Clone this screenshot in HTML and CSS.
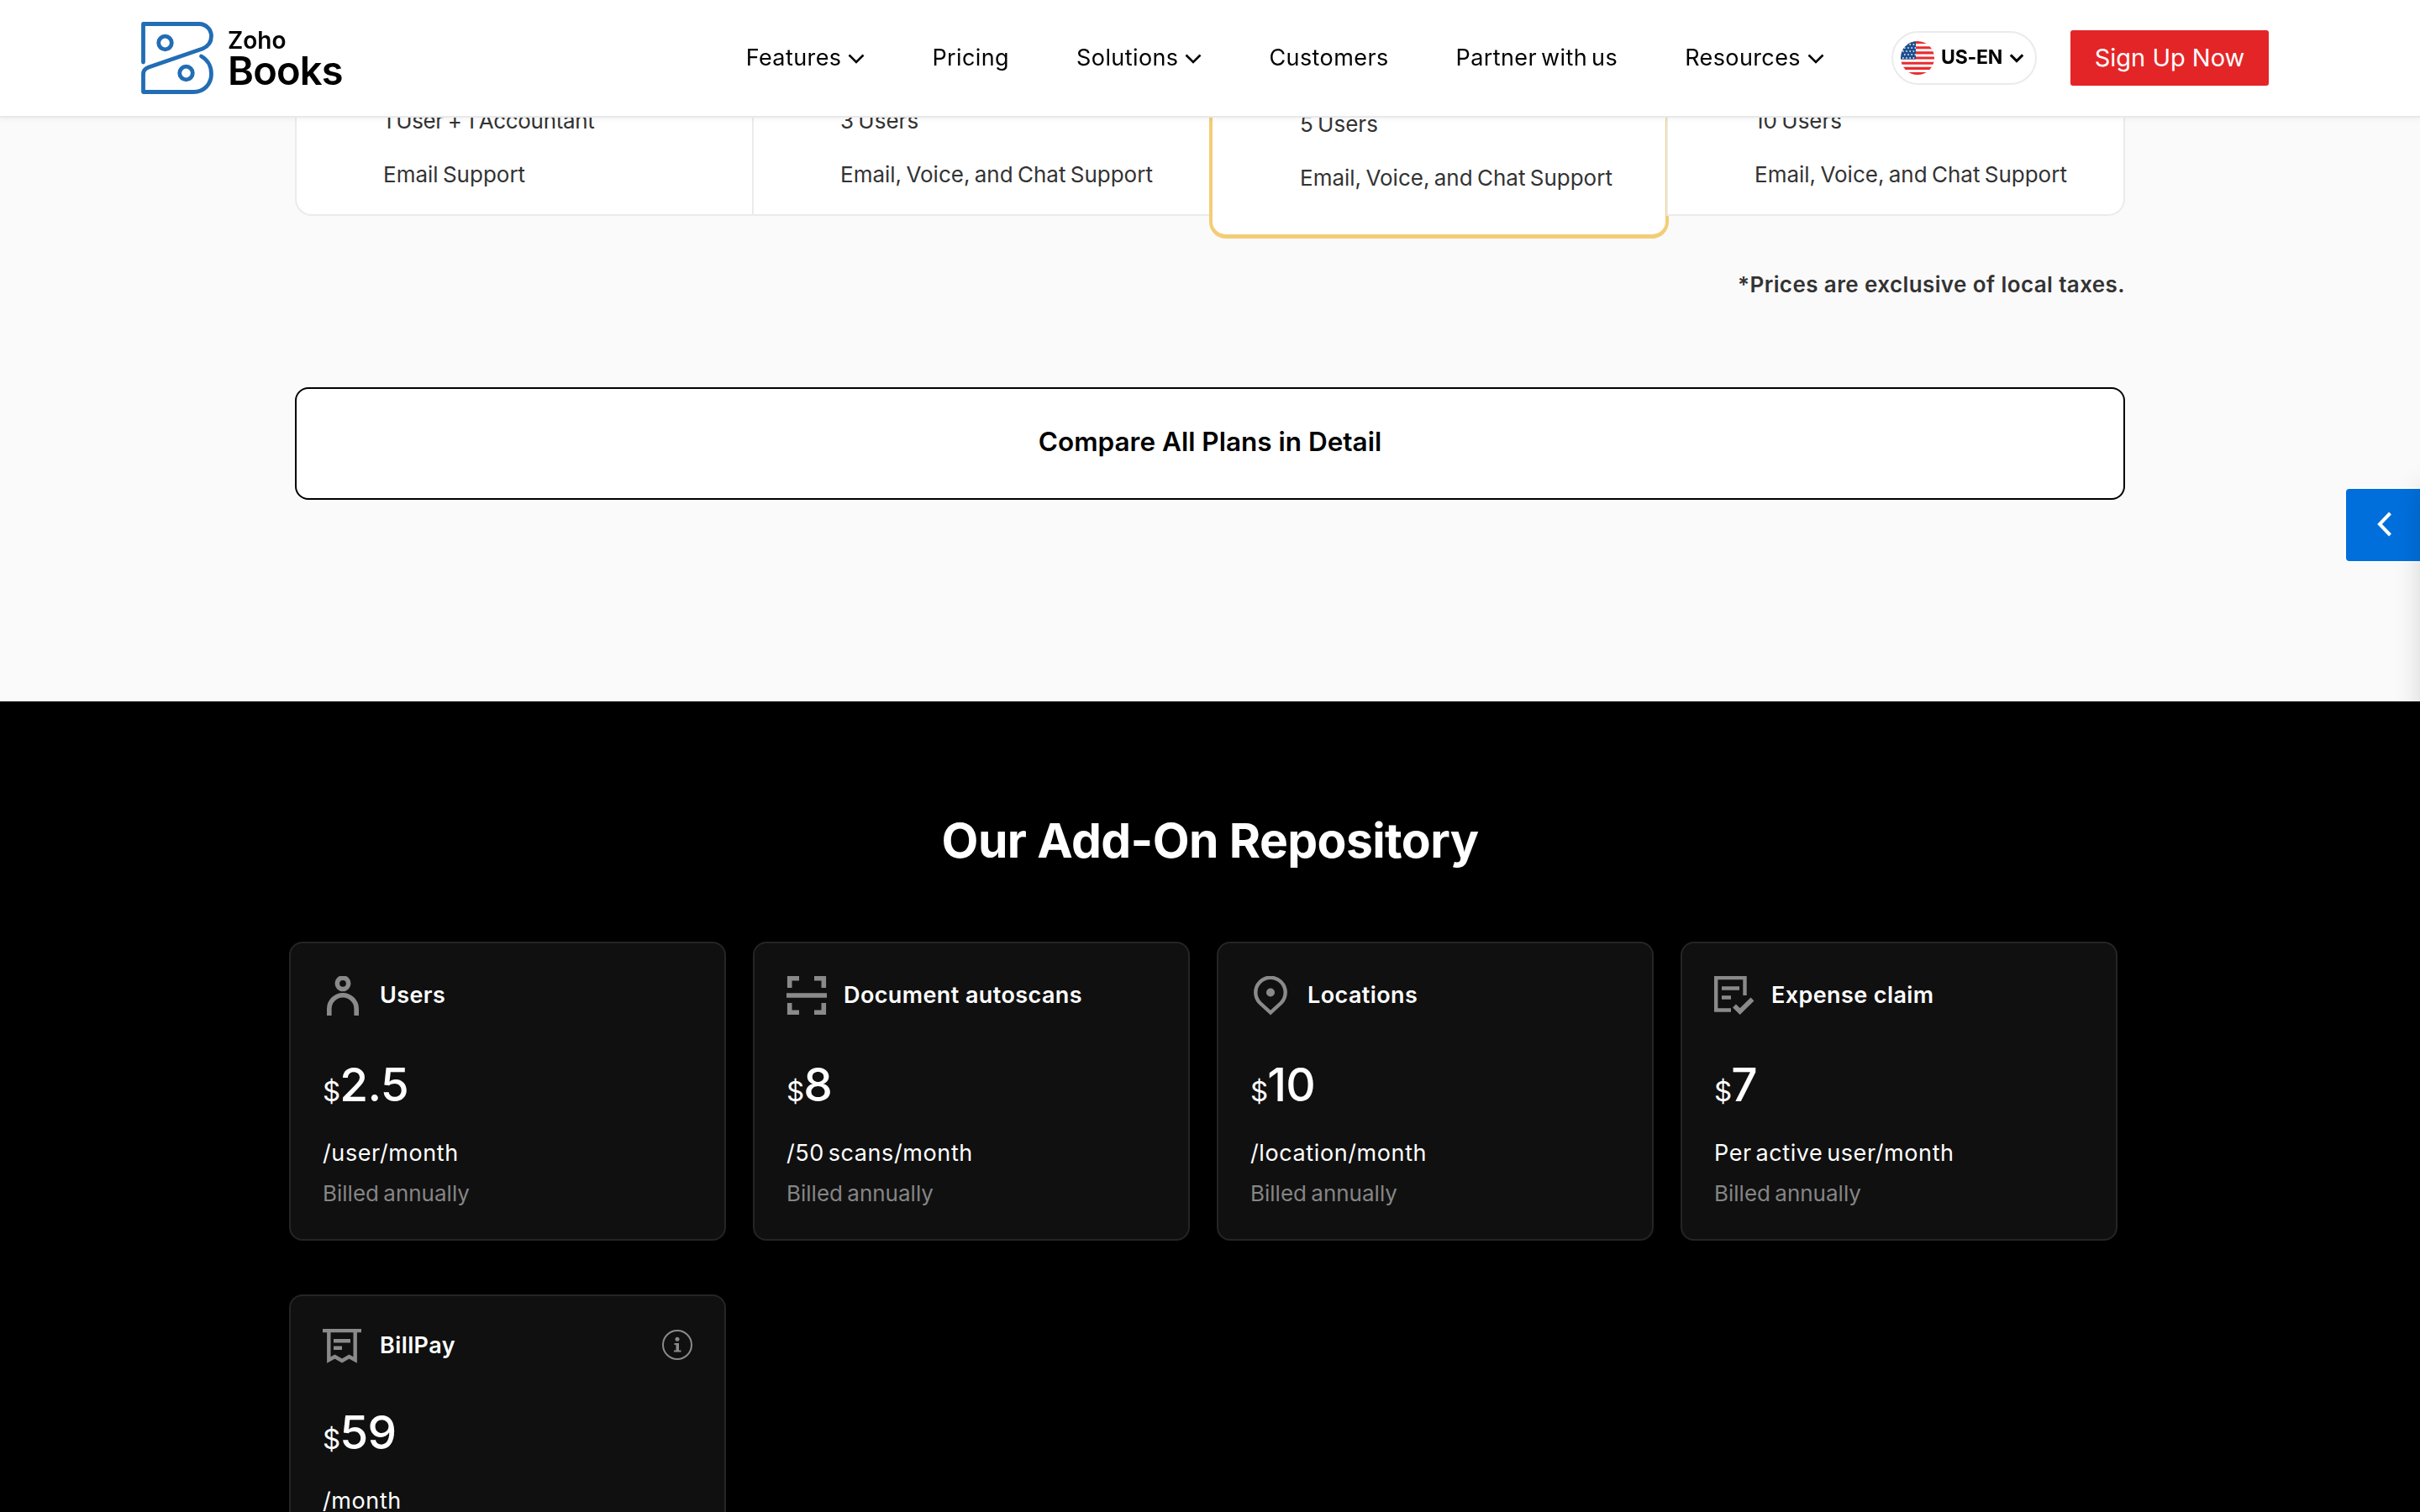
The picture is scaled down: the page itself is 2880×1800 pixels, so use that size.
FILE: index.html
```html
<!DOCTYPE html>
<html lang="en">
<head>
    <meta charset="UTF-8">
    <meta name="viewport" content="width=device-width, initial-scale=1.0">
    <title>Pricing | Zoho Books</title>
    <link rel="stylesheet" href="styles.css">
</head>
<body>

<header class="header">
    <a class="logo" href="#">
        <svg width="86" height="86" viewBox="0 0 86 86" fill="none" stroke="#226db4" stroke-width="4.8" stroke-linecap="round" stroke-linejoin="round">
            <path d="M2.5 48V2.5H69C77 2.5 83.5 9 83.5 17C83.5 24 80 29 73 32L9 54C5 55.5 2.5 58 2.5 62V83.5H62C75 83.5 83.5 74 83.5 62C83.5 53 79 45 71.5 41"/>
            <circle cx="28.5" cy="25" r="7.8"/>
            <circle cx="53.5" cy="61" r="7.8"/>
        </svg>
        <span class="logo-text">
            <span class="logo-zoho">Zoho</span>
            <span class="logo-books">Books</span>
        </span>
    </a>
    <nav class="nav">
        <a class="nav-link" href="#">Features <svg class="chevron" viewBox="0 0 20 12"><path d="M1.5 1.5L10 10L18.5 1.5"/></svg></a>
        <a class="nav-link" href="#">Pricing</a>
        <a class="nav-link" href="#">Solutions <svg class="chevron" viewBox="0 0 20 12"><path d="M1.5 1.5L10 10L18.5 1.5"/></svg></a>
        <a class="nav-link" href="#">Customers</a>
        <a class="nav-link" href="#">Partner with us</a>
        <a class="nav-link" href="#">Resources <svg class="chevron" viewBox="0 0 20 12"><path d="M1.5 1.5L10 10L18.5 1.5"/></svg></a>
    </nav>
    <button class="lang">
        <svg class="flag" width="40" height="40" viewBox="0 0 40 40">
            <clipPath id="round"><circle cx="20" cy="20" r="20"/></clipPath>
            <g clip-path="url(#round)">
                <rect width="40" height="40" fill="#fff"/>
                <path d="M0 1.5H40M0 7.7H40M0 13.9H40M0 20H40M0 26.2H40M0 32.4H40M0 38.5H40" stroke="#ea2b2e" stroke-width="3.1"/>
                <rect width="18" height="21.5" fill="#1c4f8f"/>
                <path d="M2 4H18M4 8H18M2 12H18M4 16H18M2 20H18" stroke="#fff" stroke-width="1.6" stroke-dasharray="1.6 2.6"/>
            </g>
        </svg>
        <span>US-EN</span>
        <svg class="chevron bold" viewBox="0 0 20 12"><path d="M2 2L10 10L18 2"/></svg>
    </button>
    <a class="signup" href="#">Sign Up Now</a>
</header>

<section class="plans-section">
    <div class="plans">
        <ul class="plan">
            <li class="tight">1 User + 1 Accountant</li>
            <li>Email Support</li>
        </ul>
        <ul class="plan">
            <li>3 Users</li>
            <li>Email, Voice, and Chat Support</li>
        </ul>
        <ul class="plan popular">
            <li>5 Users</li>
            <li>Email, Voice, and Chat Support</li>
        </ul>
        <ul class="plan">
            <li>10 Users</li>
            <li>Email, Voice, and Chat Support</li>
        </ul>
    </div>
    <p class="tax-note">*Prices are exclusive of local taxes.</p>
    <a class="compare" href="#">Compare All Plans in Detail</a>
</section>

<section class="addons-section">
    <h2>Our Add-On Repository</h2>
    <div class="addons">
        <div class="addon">
            <div class="addon-head">
                <svg class="icon" width="48" height="47" viewBox="0 0 48 47">
                    <circle cx="24" cy="8.8" r="6.7"/>
                    <path d="M7.8 47V39a16.2 16.2 0 0 1 32.4 0V47"/>
                </svg>
                <h3>Users</h3>
            </div>
            <p class="price"><span class="currency">$</span><span class="amount">2.5</span></p>
            <p class="unit">/user/month</p>
            <p class="billed">Billed annually</p>
        </div>
        <div class="addon">
            <div class="addon-head">
                <svg class="icon" width="48" height="47" viewBox="0 0 48 47">
                    <path d="M3.7 14V2.7H15M33 2.7H44.3V14M44.3 32V43.3H33M15 43.3H3.7V32M0 23H48"/>
                </svg>
                <h3>Document autoscans</h3>
            </div>
            <p class="price"><span class="currency">$</span><span class="amount">8</span></p>
            <p class="unit">/50 scans/month</p>
            <p class="billed">Billed annually</p>
        </div>
        <div class="addon">
            <div class="addon-head">
                <svg class="icon" width="48" height="47" viewBox="0 0 48 47">
                    <path class="thin" d="M24 43.5L11.5 32A17.7 17.7 0 1 1 36.5 32Z"/>
                    <circle class="dot" cx="24" cy="19.5" r="5"/>
                </svg>
                <h3>Locations</h3>
            </div>
            <p class="price"><span class="currency">$</span><span class="amount">10</span></p>
            <p class="unit">/location/month</p>
            <p class="billed">Billed annually</p>
        </div>
        <div class="addon">
            <div class="addon-head">
                <svg class="icon" width="48" height="47" viewBox="0 0 48 47">
                    <path class="thin" d="M20 40.5H2.2V2H36.5V23M9 14.5H30M9 25.5H20"/>
                    <path d="M24 35.5L30.7 42L45.5 27.5"/>
                </svg>
                <h3>Expense claim</h3>
            </div>
            <p class="price"><span class="currency">$</span><span class="amount">7</span></p>
            <p class="unit">Per active user/month</p>
            <p class="billed">Billed annually</p>
        </div>
        <div class="addon">
            <div class="addon-head">
                <svg class="icon" width="48" height="41" viewBox="0 0 48 41">
                    <path class="thin" d="M0 2H46M13 14.2H33M13 22.8H23M7.3 2V37L14.5 33L23 38L31.5 33L38.7 37V2"/>
                </svg>
                <h3>BillPay</h3>
                <svg class="info" width="36" height="36" viewBox="0 0 36 36">
                    <circle cx="18" cy="18" r="17" fill="none" stroke="#8a8a8a" stroke-width="2"/>
                    <circle cx="18" cy="11.3" r="2.5" fill="#8a8a8a"/>
                    <path d="M14.5 16H20V24.5H22.5V26.5H14V24.5H16.5V18H14.5Z" fill="#8a8a8a"/>
                </svg>
            </div>
            <p class="price"><span class="currency">$</span><span class="amount">59</span></p>
            <p class="unit">/month</p>
        </div>
    </div>
</section>

<button class="side-tab">
    <svg width="18" height="30" viewBox="0 0 18 30"><path d="M15.5 2L3 15L15.5 28"/></svg>
</button>
<div class="side-panel"></div>

</body>
</html>
```
FILE: styles.css
```css
* {
    box-sizing: border-box;
}

body {
    margin: 0;
    height: 1800px;
    overflow: hidden;
    font-family: Inter, "Liberation Sans", sans-serif;
    font-size: 26px;
    color: #333;
    background: #fafafa;
}

h2, h3, p, ul {
    margin: 0;
    padding: 0;
}

a {
    color: inherit;
    text-decoration: none;
}

button {
    font-family: inherit;
    padding: 0;
}

/* Header */
.header {
    position: fixed;
    top: 0;
    left: 0;
    right: 0;
    z-index: 10;
    height: 140px;
    padding: 0 180px 0 168px;
    display: flex;
    align-items: center;
    background: #fff;
    border-bottom: 2px solid #e7e9eb;
    box-shadow: 0 2px 6px rgba(0, 0, 0, 0.05);
    color: #000;
}

.logo {
    display: flex;
    gap: 17px;
    margin-right: auto;
}

.logo-text {
    display: flex;
    flex-direction: column;
    padding-top: 7px;
    font-weight: 600;
}

.logo-zoho {
    font-size: 28px;
    line-height: 30px;
}

.logo-books {
    font-size: 47px;
    line-height: 42px;
    letter-spacing: -0.8px;
}

.nav {
    display: flex;
    gap: 80px;
    margin-right: 80px;
    padding-bottom: 2px;
}

.nav-link {
    display: flex;
    align-items: center;
    gap: 8px;
    font-size: 27px;
    letter-spacing: 0.4px;
    word-spacing: -3px;
}

.chevron {
    width: 20px;
    height: 12px;
    margin-top: 3px;
    fill: none;
    stroke: #000;
    stroke-width: 2.6;
}

.chevron.bold {
    width: 18px;
    margin-top: 0;
    stroke-width: 3.4;
}

.lang {
    display: flex;
    align-items: center;
    width: 173px;
    height: 64px;
    padding-left: 9px;
    border: 2px solid #ebebeb;
    border-radius: 32px;
    background: #fff;
    color: #000;
    font-size: 23px;
    font-weight: 700;
    letter-spacing: -0.2px;
}

.lang span {
    margin: 0 8px;
    padding-bottom: 2px;
}

.signup {
    display: flex;
    align-items: center;
    justify-content: center;
    width: 236px;
    height: 66px;
    margin-left: 40px;
    padding-bottom: 2px;
    border-radius: 3px;
    background: #e42527;
    color: #fff;
    font-size: 29px;
}

/* Plans */
.plans-section {
    height: 835px;
    padding: 80px 351px 0;
    overflow: hidden;
}

.plans {
    display: grid;
    grid-template-columns: 544px 544px 544px 546px;
    align-items: start;
}

.plan {
    position: relative;
    height: 177px;
    padding: 30px 0 0 103px;
    list-style: none;
    line-height: 64px;
    word-spacing: -2px;
    background: #fff;
    border: 2px solid #ebebeb;
    border-right: 0;
    white-space: nowrap;
}

.plan .tight {
    letter-spacing: -0.35px;
}

.plan:first-child {
    border-bottom-left-radius: 20px;
}

.plan:last-child {
    border-right: 2px solid #ebebeb;
    border-bottom-right-radius: 20px;
}

.plan.popular {
    width: 547px;
    height: 204px;
    padding: 32px 0 0 104px;
    border: 4px solid #f3cd76;
    border-bottom-width: 5px;
    border-radius: 0 0 20px 20px;
}

.tax-note {
    margin-top: 31px;
    line-height: 48px;
    font-size: 26px;
    font-weight: 600;
    letter-spacing: 0.4px;
    text-align: right;
}

.compare {
    display: flex;
    align-items: center;
    justify-content: center;
    height: 134px;
    margin-top: 98px;
    padding-bottom: 5px;
    background: #fff;
    border: 2px solid #000;
    border-radius: 16px;
    color: #000;
    font-size: 31.5px;
    font-weight: 600;
}

/* Add-ons */
.addons-section {
    height: 965px;
    padding: 126px 344px 0;
    overflow: hidden;
    background: #000;
    color: #fff;
}

.addons-section h2 {
    line-height: 80px;
    font-size: 57px;
    font-weight: 700;
    letter-spacing: -0.6px;
    text-align: center;
}

.addons {
    display: grid;
    grid-template-columns: repeat(4, 520px);
    gap: 64px 32px;
    margin-top: 80px;
}

.addon {
    padding: 39px 38px 30px;
    background: #101010;
    border: 2px solid #252525;
    border-radius: 16px;
}

.addon-head {
    display: flex;
    align-items: center;
    gap: 20px;
}

.addon-head h3 {
    padding-bottom: 2px;
    line-height: 30px;
    font-size: 27px;
    font-weight: 600;
    letter-spacing: 0.4px;
}

.icon {
    fill: none;
    stroke: #8a8a8a;
    stroke-width: 5.6;
}

.icon .thin {
    stroke-width: 4.4;
}

.icon .dot {
    fill: #8a8a8a;
    stroke: none;
}

.info {
    margin: -4px 0 0 auto;
}

.price {
    margin-top: 52px;
    line-height: 60px;
    font-size: 55px;
    font-weight: 500;
}

.currency {
    line-height: 1;
    font-size: 33px;
    font-weight: 400;
}

.amount {
    margin-left: -1px;
    letter-spacing: -0.7px;
}

.unit {
    margin-top: 28px;
    line-height: 48px;
    font-size: 27px;
    letter-spacing: 0.6px;
    word-spacing: -3.5px;
}

.billed {
    line-height: 48px;
    font-size: 26px;
    word-spacing: -2px;
    color: #858585;
}

/* Side tab */
.side-tab {
    position: fixed;
    top: 580px;
    right: 0;
    z-index: 5;
    width: 90px;
    height: 90px;
    padding-left: 4px;
    background: #006fdc;
    border: 2px solid #fff;
    border-right: 0;
    border-radius: 6px 0 0 6px;
}

.side-tab svg {
    fill: none;
    stroke: #fff;
    stroke-width: 4;
}

.side-panel {
    position: fixed;
    top: 580px;
    left: 100%;
    z-index: 6;
    width: 600px;
    height: 800px;
    box-shadow: 0 0 30px rgba(0, 0, 0, 0.15);
}
```
